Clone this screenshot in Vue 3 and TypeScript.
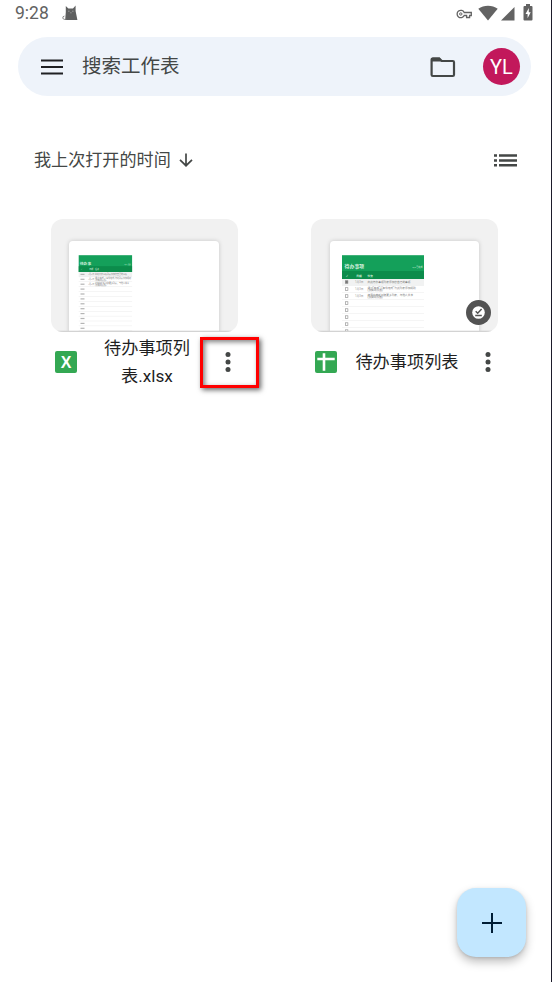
<script setup lang="ts">
interface SheetRow {
  y: number
  lines: string[]
}
interface Sheet {
  x: number
  width: number
  paperX: number
  split: number
  bottom: number
  title: string
  titleSize: number
  titleY: number
  small: number
  cols: number[]
  rows: SheetRow[]
  boxes: boolean
}
interface FileItem {
  name: string[]
  kind: 'excel' | 'sheet'
  offline: boolean
  highlighted: boolean
  sheet: Sheet
}

const notes: string[][] = [
  ['向此待办事项列表添加您自己的事项'],
  ['通过“格式”>“条件格式”为此列表添加规则', '(仅限网页版)'],
  ['使用此模板创建更多列表，与他人共享', '(仅限网页版)'],
]

function makeRows(start: number, step: number, count: number): SheetRow[] {
  return Array.from({ length: count }, (_, i) => ({ y: start + i * step, lines: notes[i] ?? [] }))
}

const files: FileItem[] = [
  {
    name: ['待办事项列', '表.xlsx'],
    kind: 'excel',
    offline: false,
    highlighted: true,
    sheet: {
      x: 27.7, width: 53.6, paperX: 18, split: 47.2, bottom: 53, title: '待办事', titleSize: 3.8,
      titleY: 45.6, small: 2, cols: [29.5, 37, 44], rows: makeRows(55.4, 4.9, 12), boxes: false,
    },
  },
  {
    name: ['待办事项列表'],
    kind: 'sheet',
    offline: true,
    highlighted: false,
    sheet: {
      x: 31, width: 82, paperX: 19, split: 52, bottom: 60, title: '待办事项', titleSize: 4.9,
      titleY: 48.6, small: 2.7, cols: [34.3, 44, 56.5], rows: makeRows(63, 7.02, 8), boxes: true,
    },
  },
]
</script>

<template>
  <div class="screen">
    <header class="status">
      <span class="clock">9:28</span>
      <svg class="cat" width="17" height="16" viewBox="0 0 17 16">
        <path d="M3.2 15 3.8 7 3.8 1 6.4 3.4H11L13.6 .4V6L15.4 15Z" fill="#5f6060" />
        <path d="M4.5 14.2C1.5 15 .2 13.4 1.2 11.6L2.4 11.1" fill="none" stroke="#777" stroke-width="1" />
        <path d="M6 6.2H7.6M10 6.2H11.6M8.2 7.8H9.6" stroke="#b0b0b0" stroke-width=".7" />
      </svg>
      <div class="indicators">
        <svg class="key" width="16" height="10" viewBox="0 0 16 10">
          <path d="M8.2 3.5A3.7 3.7 0 1 0 8.2 6.5H10.6V8.5H13.6V6.5H15.3V3.5Z" fill="none" stroke="#626262" stroke-width="1.3" />
          <circle cx="4.8" cy="5" r="1.2" fill="none" stroke="#626262" />
        </svg>
        <svg class="wifi" width="20" height="16" viewBox="0 0 20 16"><path d="M.3 3.8C5.8-.4 14.2-.4 19.7 3.8L10 15.5Z" fill="#636363" /></svg>
        <svg class="signal" width="14" height="14" viewBox="0 0 14 14"><path d="M13.5 0V13.5H0Z" fill="#636363" /></svg>
        <svg class="battery" width="10" height="17" viewBox="0 0 10 17">
          <path d="M3 0H7V2H8.5Q9.5 2 9.5 3V15.5Q9.5 16.5 8.5 16.5H1.5Q.5 16.5 .5 15.5V3Q.5 2 1.5 2H3Z" fill="#626262" />
          <path d="M5.8 4 2.5 10H4.6V14.2L7.7 8.3H5.8Z" fill="#fff" />
        </svg>
      </div>
    </header>

    <div class="search">
      <svg class="menu" width="22" height="16" viewBox="0 0 22 16"><path d="M0 1.5H22M0 8H22M0 14.5H22" stroke="#1f2023" stroke-width="2" /></svg>
      <span class="placeholder">搜索工作表</span>
      <svg class="folder" width="26" height="21" viewBox="0 0 26 21">
        <path d="M2.8 1.5H9.3L11.8 4H22.8Q24 4 24 5.2V17.8Q24 19 22.8 19H2.8Q1.6 19 1.6 17.8V2.7Q1.6 1.5 2.8 1.5Z" fill="none" stroke="#444746" stroke-width="2.2" />
        <path d="M1 2.6Q1 .5 2.8 .5H9.6L12.5 4.5H1Z" fill="#444746" />
      </svg>
      <span class="avatar">YL</span>
    </div>

    <div class="sort">
      <span class="sort-label">我上次打开的时间</span>
      <svg class="arrow" width="14" height="14" viewBox="0 0 14 14"><path d="M7 .5V12.5M1 6.8 7 12.7 13 6.8" fill="none" stroke="#444746" stroke-width="1.7" /></svg>
      <svg class="list" width="23" height="14" viewBox="0 0 23 14"><path d="M0 2.5H3M5 2.5H23M0 7.4H3M5 7.4H23M0 12.3H3M5 12.3H23" stroke="#444746" stroke-width="2.5" /></svg>
    </div>

    <main class="files">
      <article v-for="file in files" :key="file.kind" class="file">
        <div class="thumb">
          <svg class="preview" width="187" height="113" viewBox="0 0 187 113">
            <rect class="paper" :x="file.sheet.paperX" y="22" :width="168 - file.sheet.paperX" height="104" rx="4" />
            <rect :x="file.sheet.x" y="36.2" :width="file.sheet.width" :height="file.sheet.bottom - 36.2" fill="#14a05a" />
            <rect :x="file.sheet.x" :y="file.sheet.split" :width="file.sheet.width" :height="file.sheet.bottom - file.sheet.split" fill="#0c8c4b" />
            <rect :x="file.sheet.x" :y="file.sheet.bottom" :width="file.sheet.width" :height="file.sheet.boxes ? 6.4 : 4.8" fill="#f1f2f2" />
            <g fill="#d3eedd">
              <text :x="file.sheet.cols[0] - 0.7" :y="file.sheet.titleY" :font-size="file.sheet.titleSize" font-weight="700">{{ file.sheet.title }}</text>
              <text :x="file.sheet.x + file.sheet.width - 1.5" :y="file.sheet.titleY + 0.4" :font-size="file.sheet.boxes ? 2.1 : 1.3" text-anchor="end">0/3 已完成</text>
              <g :font-size="file.sheet.small" :font-weight="file.sheet.boxes ? 700 : 400">
                <text :x="file.sheet.cols[0] + 0.6" :y="file.sheet.bottom - 2.4">✓</text>
                <text :x="file.sheet.cols[1] + 1.3" :y="file.sheet.bottom - 2.4">日期</text>
                <text :x="file.sheet.cols[2]" :y="file.sheet.bottom - 2.4">任务</text>
              </g>
            </g>
            <g v-for="(row, i) in file.sheet.rows" :key="i" fill="#777" :font-size="file.sheet.small">
              <rect v-if="file.sheet.boxes" :x="file.sheet.cols[0]" :y="row.y - 1.3" width="2.6" height="2.6" :fill="i === 0 ? '#777' : '#fff'" stroke="#888" stroke-width=".6" />
              <rect v-else :x="file.sheet.cols[0]" :y="row.y - 0.6" width="4" height="1.2" fill="#b4b4b4" />
              <text v-if="row.lines.length" :x="file.sheet.cols[1]" :y="row.y + 0.9" fill="#999">1月3日</text>
              <text v-for="(line, n) in row.lines" :key="n" :x="file.sheet.cols[2]" :y="row.y + 0.9 + (n - (row.lines.length - 1) / 2) * file.sheet.small">{{ line }}</text>
              <rect :x="file.sheet.x" :y="row.y + (file.sheet.boxes ? 3.3 : 2.3)" :width="file.sheet.width" height=".4" fill="#e6e6e6" />
            </g>
            <rect :x="file.sheet.x + file.sheet.width" y="34" :width="166 - file.sheet.x - file.sheet.width" height="80" fill="#fff" />
            <rect x="0" y="111.7" width="187" height="1.3" fill="#d3d3d3" />
          </svg>
          <span v-if="file.offline" class="badge">
            <svg width="25" height="25" viewBox="0 0 25 25">
              <circle cx="12.5" cy="12.5" r="12.5" fill="#535353" />
              <circle cx="12.5" cy="12.5" r="6.3" fill="#fff" />
              <path d="M9.7 11.2 11.7 13.2 15.6 8.9M9.2 15.5H15.8" fill="none" stroke="#535353" stroke-width="1.5" />
            </svg>
          </span>
        </div>
        <div class="caption">
          <svg class="type" width="22" height="22" viewBox="0 0 22 22">
            <rect width="22" height="22" rx="2" fill="#34a853" />
            <path v-if="file.kind === 'sheet'" d="M2.3 8H19.7M9 2.3V19.7" stroke="#fff" stroke-width="2.6" />
            <text v-else class="letter" x="11" y="17" text-anchor="middle">X</text>
          </svg>
          <div class="name"><span v-for="line in file.name" :key="line">{{ line }}</span></div>
          <div class="more" :class="{ highlighted: file.highlighted }">
            <svg width="6" height="20" viewBox="0 0 6 20" fill="#444746"><circle cx="3" cy="2.6" r="2.5" /><circle cx="3" cy="10" r="2.5" /><circle cx="3" cy="17.4" r="2.5" /></svg>
          </div>
        </div>
      </article>
    </main>

    <button class="create" type="button">
      <svg width="20" height="20" viewBox="0 0 20 20"><path d="M10 0V20M0 10H20" stroke="#001d35" stroke-width="2" /></svg>
    </button>
  </div>
</template>

<style>
body {
  margin: 0;
}
</style>

<style scoped>
.screen {
  box-sizing: border-box;
  width: 552px;
  height: 982px;
  display: flex;
  flex-direction: column;
  border-right: 1px solid #1d1c2b;
  background: #fff;
  font-family: Roboto, "Noto Sans CJK SC", sans-serif;
  color: #444746;
  overflow: hidden;
}
svg {
  display: block;
  flex: none;
}
.status {
  height: 27px;
  flex: none;
  display: flex;
  align-items: center;
  padding: 0 18px 0 15px;
}
.clock {
  width: 47px;
  font-size: 17.5px;
  line-height: 27px;
  color: #626262;
}
.cat {
  margin-bottom: 2px;
}
.indicators {
  margin-left: auto;
  display: flex;
  align-items: center;
  height: 26px;
}
.wifi {
  margin: 0 0 2px 6px;
}
.signal {
  margin: 0 8px 0 3px;
}
.battery {
  margin-bottom: 2px;
}
.search {
  box-sizing: border-box;
  width: 513px;
  height: 59px;
  flex: none;
  margin: 10px 0 0 18px;
  padding: 0 11px 0 23px;
  display: flex;
  align-items: center;
  border-radius: 30px;
  background: #eef3fa;
}
.placeholder {
  margin-left: 19px;
  padding-top: 1px;
  font-size: 19.5px;
  line-height: 28px;
}
.folder {
  margin: 1px 27px 0 auto;
}
.avatar {
  width: 37px;
  height: 37px;
  border-radius: 50%;
  background: #c2185b;
  color: #fff;
  font-size: 20px;
  line-height: 38px;
  text-align: center;
}
.sort {
  height: 28px;
  flex: none;
  margin: 50px 34px 0;
  display: flex;
  align-items: center;
}
.sort-label {
  font-size: 17.1px;
  line-height: 28px;
}
.arrow {
  margin-left: 8px;
}
.list {
  margin-left: auto;
}
.files {
  display: grid;
  grid-template-columns: 187px 187px;
  column-gap: 73px;
  margin: 45px 0 0 51px;
}
.thumb {
  position: relative;
  height: 113px;
  overflow: hidden;
  border-radius: 12px;
  background: #f1f1f1;
}
.paper {
  fill: #fff;
  filter: drop-shadow(0 0 2px rgba(0, 0, 0, 0.18));
}
.badge {
  position: absolute;
  right: 7px;
  bottom: 7px;
}
.caption {
  height: 60px;
  display: flex;
  align-items: center;
  padding-left: 4px;
}
.letter {
  font-family: "Liberation Sans", sans-serif;
  font-size: 16px;
  font-weight: 700;
  fill: #fff;
}
.name {
  flex: none;
  width: 142px;
  margin-left: -1px;
  display: flex;
  flex-direction: column;
  align-items: center;
  font-size: 17.2px;
  line-height: 28px;
  color: #1f1f1f;
  white-space: nowrap;
}
.more {
  box-sizing: border-box;
  flex: none;
  width: 59px;
  height: 51px;
  margin-left: -18px;
  padding-right: 4px;
  display: flex;
  align-items: center;
  justify-content: center;
}
.highlighted {
  border: 3px solid #f00;
  box-shadow: 2px 2px 5px rgba(0, 0, 0, 0.6), inset 2px 2px 5px rgba(0, 0, 0, 0.5);
}
.create {
  width: 69px;
  height: 69px;
  flex: none;
  align-self: flex-end;
  margin: auto 25px 25px 0;
  padding: 0;
  border: 0;
  border-radius: 19px;
  display: flex;
  align-items: center;
  justify-content: center;
  background: #c2e7ff;
  box-shadow: 0 5px 10px rgba(0, 0, 0, 0.25), 0 1px 3px rgba(0, 0, 0, 0.12);
}
</style>
